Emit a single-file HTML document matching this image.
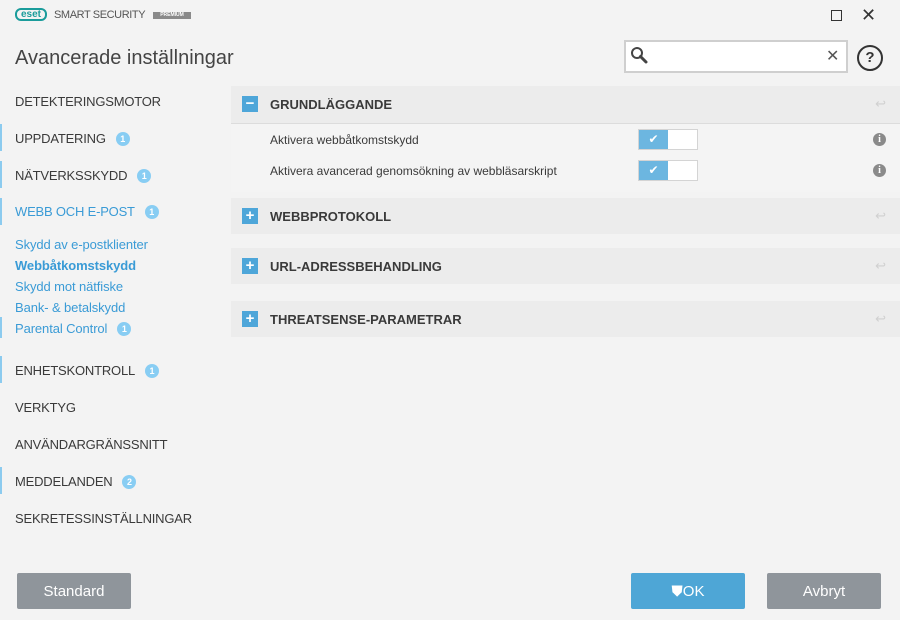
<!DOCTYPE html>
<html><head><meta charset="utf-8"><style>
*{margin:0;padding:0;box-sizing:border-box}
body{width:900px;height:620px;background:#f3f3f3;font-family:"Liberation Sans",sans-serif;position:relative;overflow:hidden;color:#3c3c3c}
.abs{position:absolute}
.nav{position:absolute;left:15px;font-size:13px;color:#3a3a3a;white-space:nowrap;letter-spacing:-0.2px}
.bar{position:absolute;left:0;width:2px;background:#8ccbef}
.badge{display:inline-block;width:14px;height:14px;border-radius:50%;background:#88cdf3;color:#fff;font-size:9px;font-weight:bold;text-align:center;line-height:14px;margin-left:10px;vertical-align:1px;letter-spacing:0}
.sub{position:absolute;left:15px;font-size:13px;color:#3a9bd6;white-space:nowrap;letter-spacing:-0.1px}
.hdr{position:absolute;left:231px;width:669px;background:#ececec;height:36px}
.hdr .ic{position:absolute;left:11px;top:10px;width:16px;height:16px;background:#4ea6d9;color:#fff;font-weight:bold;font-size:15px;line-height:15px;text-align:center}
.hdr .t{position:absolute;left:39px;top:11px;font-size:13px;font-weight:bold;color:#3a3a3a}
.hdr .u{position:absolute;right:14px;top:10px;color:#d0d0d0;font-size:13px}
.tog{position:absolute;left:638px;width:60px;height:21px;border:1px solid #d4d4d4;background:#fff}
.tog i{position:absolute;left:0;top:0;width:29px;height:19px;background:#6cb6e0}
.tog span{position:absolute;left:0;top:2px;width:29px;text-align:center;color:#fff;font-size:12px}
.info{position:absolute;left:873px;width:13px;height:13px;border-radius:50%;background:#8a8a8a;color:#fff;font-size:10px;font-weight:bold;text-align:center;line-height:13px;font-family:"Liberation Serif",serif}
.lbl{position:absolute;left:270px;font-size:12px;color:#3a3a3a}
.btn{position:absolute;top:573px;height:36px;width:114px;color:#fff;font-size:15px;text-align:center;line-height:38px;border-radius:2px}
</style></head><body>
<div class="abs" style="left:15px;top:8px;width:32px;height:13px;border:2px solid #1a9c9b;border-radius:6px;color:#1a9c9b;font-size:10px;font-weight:bold;line-height:9px;text-align:center">eset</div>
<div class="abs" style="left:54px;top:9px;font-size:11px;color:#555;letter-spacing:-0.4px">SMART SECURITY</div>
<div class="abs" style="left:153px;top:12px;width:38px;height:7px;background:#8a8a8a;color:#fff;font-size:5px;line-height:7px;text-align:center;font-weight:bold">PREMIUM</div>
<div class="abs" style="left:831px;top:10px;width:11px;height:11px;border:1.5px solid #333"></div>
<div class="abs" style="left:861px;top:5px;font-size:18px;color:#333">✕</div>
<div class="abs" style="left:15px;top:47px;font-size:20px;color:#444">Avancerade inställningar</div>
<div class="abs" style="left:624px;top:40px;width:224px;height:33px;border:2px solid #cfcfcf;background:#fff"></div>
<svg class="abs" style="left:629px;top:45px" width="22" height="22" viewBox="0 0 22 22"><circle cx="8" cy="8" r="5" fill="none" stroke="#444" stroke-width="2"/><path d="M11.5 11.5 L17 17" stroke="#444" stroke-width="3" stroke-linecap="round"/></svg>
<div class="abs" style="left:826px;top:46px;font-size:16px;color:#555">✕</div>
<div class="abs" style="left:857px;top:45px;width:26px;height:26px;border:2px solid #333;border-radius:50%;text-align:center;font-weight:bold;font-size:15px;line-height:22px;color:#333">?</div>

<div class="nav" style="top:94px">DETEKTERINGSMOTOR</div>
<div class="bar" style="top:124px;height:27px"></div><div class="nav" style="top:131px">UPPDATERING<span class="badge">1</span></div>
<div class="bar" style="top:161px;height:27px"></div><div class="nav" style="top:168px">NÄTVERKSSKYDD<span class="badge">1</span></div>
<div class="bar" style="top:198px;height:27px"></div><div class="nav" style="top:204px;color:#3a9bd6">WEBB OCH E-POST<span class="badge">1</span></div>
<div class="sub" style="top:237px">Skydd av e-postklienter</div>
<div class="sub" style="top:258px;font-weight:bold">Webbåtkomstskydd</div>
<div class="sub" style="top:279px">Skydd mot nätfiske</div>
<div class="sub" style="top:300px">Bank- &amp; betalskydd</div>
<div class="bar" style="top:317px;height:21px"></div><div class="sub" style="top:321px">Parental Control<span class="badge">1</span></div>
<div class="bar" style="top:356px;height:27px"></div><div class="nav" style="top:363px">ENHETSKONTROLL<span class="badge">1</span></div>
<div class="nav" style="top:400px">VERKTYG</div>
<div class="nav" style="top:437px">ANVÄNDARGRÄNSSNITT</div>
<div class="bar" style="top:467px;height:27px"></div><div class="nav" style="top:474px">MEDDELANDEN<span class="badge">2</span></div>
<div class="nav" style="top:511px">SEKRETESSINSTÄLLNINGAR</div>

<div class="hdr" style="top:86px;border-bottom:1px solid #dcdcdc;height:38px"><div class="ic">−</div><div class="t">GRUNDLÄGGANDE</div><div class="u">↩</div></div>
<div class="abs" style="left:231px;top:124px;width:669px;height:68px;background:#f4f4f4"></div>
<div class="lbl" style="top:133px">Aktivera webbåtkomstskydd</div>
<div class="tog" style="top:129px"><i></i><span>✔</span></div>
<div class="info" style="top:133px">i</div>
<div class="lbl" style="top:164px">Aktivera avancerad genomsökning av webbläsarskript</div>
<div class="tog" style="top:160px"><i></i><span>✔</span></div>
<div class="info" style="top:164px">i</div>
<div class="hdr" style="top:198px"><div class="ic">+</div><div class="t">WEBBPROTOKOLL</div><div class="u">↩</div></div>
<div class="hdr" style="top:248px"><div class="ic">+</div><div class="t">URL-ADRESSBEHANDLING</div><div class="u">↩</div></div>
<div class="hdr" style="top:301px"><div class="ic">+</div><div class="t">THREATSENSE-PARAMETRAR</div><div class="u">↩</div></div>

<div class="btn" style="left:17px;background:#8f959b">Standard</div>
<div class="btn" style="left:631px;background:#4ea6d6">⛊OK</div>
<div class="btn" style="left:767px;background:#8f959b">Avbryt</div>
</body></html>
